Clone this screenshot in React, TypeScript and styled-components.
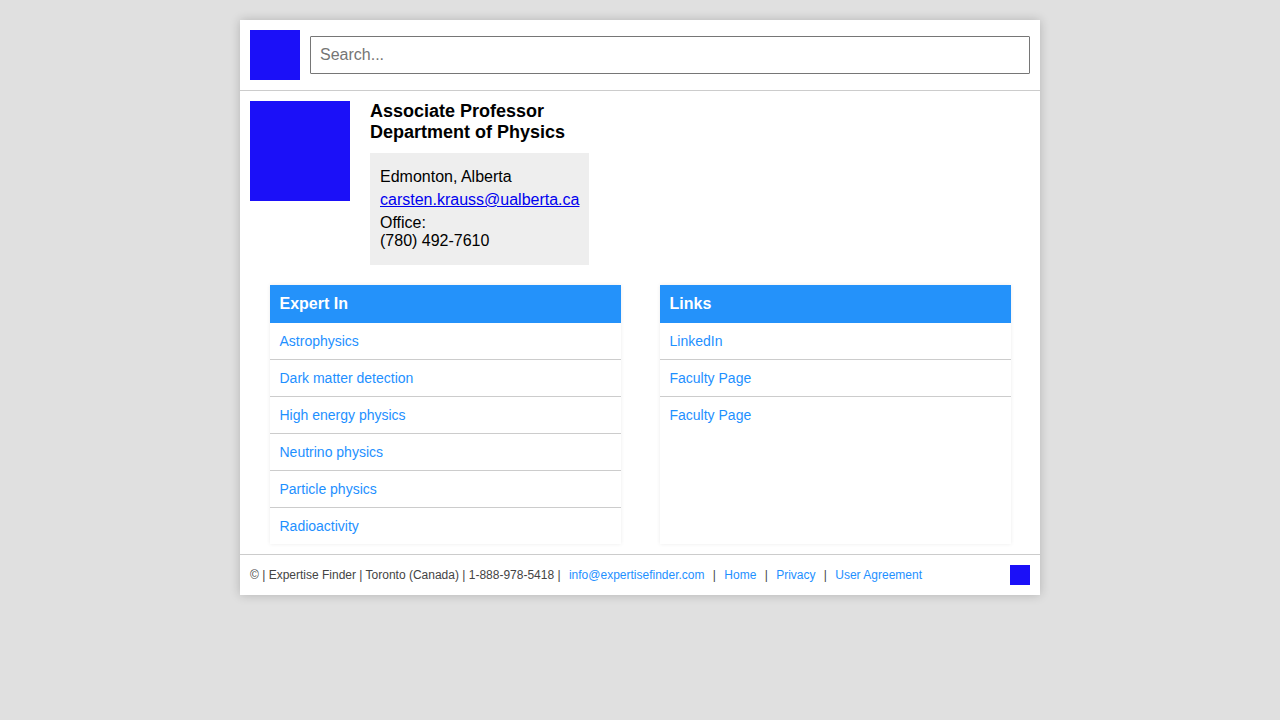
import { Fragment } from "react";
import styled, { createGlobalStyle } from "styled-components";

const GlobalStyle = createGlobalStyle`
  *, *::before, *::after {
    box-sizing: border-box;
  }
  body {
    margin: 0;
    background: #e0e0e0;
    color: #000;
    font-family: "Liberation Sans", Arial, Helvetica, sans-serif;
    font-size: 16px;
    line-height: 18px;
  }
`;

const Page = styled.div`
  width: 100%;
  max-width: 800px;
  margin: 20px auto;
  background: #fff;
  box-shadow: 0 0 10px rgba(0, 0, 0, 0.2);
`;

const Header = styled.header`
  display: flex;
  align-items: center;
  gap: 10px;
  padding: 10px;
  border-bottom: 1px solid #ccc;
`;

const Block = styled.div<{ $size: number }>`
  flex: none;
  width: ${({ $size }) => $size}px;
  height: ${({ $size }) => $size}px;
  background: #1b10f8;
`;

const SearchForm = styled.form`
  display: flex;
  flex: 1;
`;

const SearchInput = styled.input`
  flex: 1;
  min-width: 0;
  padding: 9px;
  border: 1px solid #767676;
  border-radius: 1px;
  font-family: inherit;
  font-size: 16px;
`;

const Profile = styled.section`
  display: flex;
  align-items: flex-start;
  gap: 20px;
  padding: 10px;
`;

const Position = styled.h1`
  margin: 0 0 10px;
  font-size: 18px;
  line-height: 21px;
`;

const Contact = styled.address`
  display: flex;
  flex-direction: column;
  gap: 5px;
  width: fit-content;
  padding: 15px 10px;
  background: #eee;
  font-style: normal;
`;

const MailLink = styled.a`
  color: #0000ee;
`;

const Columns = styled.main`
  display: flex;
  justify-content: space-around;
  padding: 10px;
`;

const Card = styled.section`
  width: 45%;
  box-shadow: 0 0 4px rgba(0, 0, 0, 0.08);
`;

const CardTitle = styled.h2`
  margin: 0;
  padding: 10px;
  background: #2492fa;
  color: #fff;
  font-size: 16px;
`;

const List = styled.ul`
  margin: 0;
  padding: 0;
  list-style: none;
`;

const Item = styled.li`
  padding: 10px;
  font-size: 14px;
  line-height: 16px;

  & + & {
    border-top: 1px solid #ccc;
  }
`;

const TextLink = styled.a`
  color: #1e90ff;
  text-decoration: none;
`;

const Footer = styled.footer`
  display: flex;
  align-items: center;
  justify-content: space-between;
  gap: 10px;
  padding: 10px;
  border-top: 1px solid #ccc;
  color: #444;
  font-size: 12px;
`;

const FooterText = styled.p`
  margin: 0;
`;

const FooterLink = styled(TextLink)`
  margin: 0 5px;
`;

const expertise = [
  "Astrophysics",
  "Dark matter detection",
  "High energy physics",
  "Neutrino physics",
  "Particle physics",
  "Radioactivity",
];
const links = ["LinkedIn", "Faculty Page", "Faculty Page"];
const footerLinks = [
  { label: "info@expertisefinder.com", href: "mailto:info@expertisefinder.com" },
  { label: "Home", href: "#" },
  { label: "Privacy", href: "#" },
  { label: "User Agreement", href: "#" },
];

function LinkCard({ title, items }: { title: string; items: string[] }) {
  return (
    <Card>
      <CardTitle>{title}</CardTitle>
      <List>
        {items.map((item, i) => (
          <Item key={i}>
            <TextLink href="#">{item}</TextLink>
          </Item>
        ))}
      </List>
    </Card>
  );
}

export default function App() {
  return (
    <>
      <GlobalStyle />
      <Page>
        <Header>
          <Block $size={50} />
          <SearchForm role="search">
            <SearchInput type="text" placeholder="Search..." aria-label="Search" />
          </SearchForm>
        </Header>
        <Profile>
          <Block $size={100} />
          <div>
            <Position>
              Associate Professor
              <br />
              Department of Physics
            </Position>
            <Contact>
              <div>Edmonton, Alberta</div>
              <MailLink href="mailto:carsten.krauss@ualberta.ca">carsten.krauss@ualberta.ca</MailLink>
              <div>
                Office:
                <br />
                (780) 492-7610
              </div>
            </Contact>
          </div>
        </Profile>
        <Columns>
          <LinkCard title="Expert In" items={expertise} />
          <LinkCard title="Links" items={links} />
        </Columns>
        <Footer>
          <FooterText>
            © | Expertise Finder | Toronto (Canada) | 1-888-978-5418
            {footerLinks.map(({ label, href }) => (
              <Fragment key={label}>
                {" | "}
                <FooterLink href={href}>{label}</FooterLink>
              </Fragment>
            ))}
          </FooterText>
          <Block $size={20} />
        </Footer>
      </Page>
    </>
  );
}
